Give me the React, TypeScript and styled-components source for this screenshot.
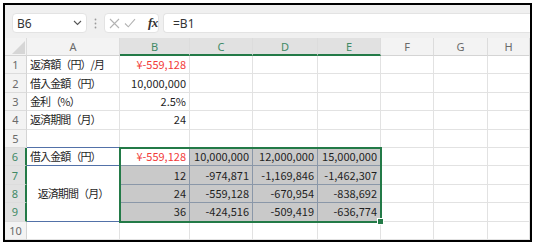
import React from 'react';
import styled, { createGlobalStyle } from 'styled-components';

const GREEN = '#237a47';
const GRID = '#e2e2e2';
const TABLE = '#8a97a8';
const BLUE = '#5271a8';
const SEL = '#c9c9c9';

const Global = createGlobalStyle`
  html, body { margin: 0; padding: 0; background: #fff; }
  body { font-family: "Noto Sans CJK JP", "Noto Sans", sans-serif; }
`;

const Frame = styled.div`
  margin: 3px 0 0 3px;
  width: 529px;
  height: 239px;
  box-sizing: border-box;
  border: 2px solid #000;
  display: flex;
  flex-direction: column;
  overflow: hidden;
  background: #fff;
`;

const Toolbar = styled.div`
  height: 33px;
  flex: none;
  box-sizing: border-box;
  padding: 8px 0 0 7px;
  background: #f0f0f0;
  display: flex;
  align-items: flex-start;
`;

const Box = styled.div`
  height: 20px;
  box-sizing: border-box;
  background: #fff;
  border: 1px solid #e3e3e3;
  border-radius: 4px;
  display: flex;
  align-items: center;
  font-family: "Noto Sans", "Open Sans", sans-serif;
  font-size: 12px;
  color: #333;
`;

const NameBox = styled(Box)`
  width: 75px;
  padding: 0 4px 0 4px;
  justify-content: space-between;
`;

const Grip = styled.div`
  width: 17px;
  height: 20px;
  display: flex;
  align-items: center;
  justify-content: center;
`;

const FxBox = styled(Box)`
  width: 55px;
  padding: 0 0 0 4px;
  gap: 4px;
`;

const FxText = styled.span`
  font-family: "Liberation Serif", "DejaVu Serif", serif;
  font-style: italic;
  font-weight: bold;
  font-size: 13px;
  color: #333;
  margin-left: 8px;
  letter-spacing: -0.5px;
`;

const FormulaBox = styled(Box)`
  flex: 1;
  margin-left: 4px;
  padding-left: 9px;
  border-right: none;
  border-radius: 4px 0 0 4px;
`;

const Sheet = styled.div`
  position: relative;
  flex: 1;
  display: grid;
  grid-template-columns: 22px 93px 70px 63px 65px 63px 53px 54px 1fr;
  grid-template-rows: 18px repeat(10, 18.4px);
  font-size: 11px;
`;

const Corner = styled.div`
  background: #f3f3f3;
  border-right: 1px solid #dcdcdc;
  border-bottom: 1px solid #d4d4d4;
  box-sizing: border-box;
  display: flex;
  align-items: flex-end;
  justify-content: flex-end;
  padding: 0 1px 1px 0;
`;

const Triangle = styled.div`
  width: 0;
  height: 0;
  border-left: 13px solid transparent;
  border-bottom: 13px solid #d6d6d6;
`;

const ColHeader = styled.div<{ $sel?: boolean }>`
  box-sizing: border-box;
  background: ${p => (p.$sel ? '#e1e1e1' : '#f3f3f3')};
  color: ${p => (p.$sel ? '#3f8a66' : '#6a6a6a')};
  border-right: 1px solid #dcdcdc;
  border-bottom: ${p => (p.$sel ? `2px solid ${GREEN}` : '1px solid #d4d4d4')};
  display: flex;
  align-items: center;
  justify-content: center;
  font-family: "Noto Sans", "Open Sans", sans-serif;
  font-size: 11px;
`;

const RowHeader = styled.div<{ $sel?: boolean }>`
  box-sizing: border-box;
  background: ${p => (p.$sel ? '#e1e1e1' : '#f3f3f3')};
  color: ${p => (p.$sel ? '#3f8a66' : '#6a6a6a')};
  border-right: ${p => (p.$sel ? `2px solid ${GREEN}` : '1px solid #d4d4d4')};
  border-bottom: 1px solid #dcdcdc;
  display: flex;
  align-items: center;
  justify-content: center;
  font-family: "Noto Sans", "Open Sans", sans-serif;
  font-size: 11px;
`;

const Cell = styled.div<{
  $align?: 'left' | 'right' | 'center';
  $fill?: string;
  $color?: string;
  $br?: string;
  $bb?: string;
  $span?: number;
  $jp?: boolean;
}>`
  box-sizing: border-box;
  grid-row: ${p => (p.$span ? `span ${p.$span}` : 'auto')};
  background: ${p => p.$fill || '#fff'};
  color: ${p => p.$color || '#1f1f1f'};
  border-right: 1px solid ${p => p.$br || GRID};
  border-bottom: 1px solid ${p => p.$bb || GRID};
  display: flex;
  align-items: center;
  justify-content: ${p =>
    p.$align === 'right' ? 'flex-end' : p.$align === 'center' ? 'center' : 'flex-start'};
  padding: 0 3px;
  white-space: nowrap;
  overflow: visible;
  line-height: 1;
  letter-spacing: ${p => (p.$jp ? '-0.9px' : '0')};
`;

const Selection = styled.div`
  position: absolute;
  grid-column: 3 / 7;
  grid-row: 7 / 11;
  top: -1px;
  left: -1px;
  right: -1px;
  bottom: -1px;
  border: 2px solid ${GREEN};
  pointer-events: none;
`;

const Handle = styled.div`
  position: absolute;
  right: -4px;
  bottom: -4px;
  width: 5px;
  height: 5px;
  background: ${GREEN};
  border: 1px solid #fff;
`;

type C = {
  text?: string;
  align?: 'left' | 'right' | 'center';
  fill?: string;
  color?: string;
  br?: string;
  bb?: string;
  span?: number;
  jp?: boolean;
};

const RED = '#f23a3a';
const cols = ['A', 'B', 'C', 'D', 'E', 'F', 'G', 'H'];
const selCols = ['B', 'C', 'D', 'E'];

const empty = (n: number, extra: Partial<C> = {}): C[] => Array.from({ length: n }, () => ({ ...extra }));

const tableRow = (vals: string[]): C[] =>
  vals.map(t => ({ text: t, align: 'right' as const, fill: SEL, br: TABLE, bb: TABLE }));

const rows: { num: number; sel?: boolean; cells: C[] }[] = [
  {
    num: 1,
    cells: [
      { text: '返済額（円）/月', jp: true },
      { text: '¥-559,128', align: 'right', color: RED },
      ...empty(6),
    ],
  },
  {
    num: 2,
    cells: [{ text: '借入金額（円）', jp: true }, { text: '10,000,000', align: 'right' }, ...empty(6)],
  },
  {
    num: 3,
    cells: [{ text: '金利（%）', jp: true }, { text: '2.5%', align: 'right' }, ...empty(6)],
  },
  {
    num: 4,
    cells: [{ text: '返済期間（月）', jp: true }, { text: '24', align: 'right' }, ...empty(6)],
  },
  {
    num: 5,
    cells: [{ bb: BLUE }, ...empty(4, { bb: TABLE }), ...empty(3)],
  },
  {
    num: 6,
    sel: true,
    cells: [
      { text: '借入金額（円）', jp: true, bb: BLUE, br: BLUE },
      { text: '¥-559,128', align: 'right', color: RED, br: TABLE, bb: TABLE },
      ...tableRow(['10,000,000', '12,000,000', '15,000,000']),
      ...empty(3),
    ],
  },
  {
    num: 7,
    sel: true,
    cells: [
      { text: '返済期間（月）', jp: true, align: 'center', span: 3, br: BLUE, bb: BLUE },
      ...tableRow(['12', '-974,871', '-1,169,846', '-1,462,307']),
      ...empty(3),
    ],
  },
  {
    num: 8,
    sel: true,
    cells: [...tableRow(['24', '-559,128', '-670,954', '-838,692']), ...empty(3)],
  },
  {
    num: 9,
    sel: true,
    cells: [...tableRow(['36', '-424,516', '-509,419', '-636,774']), ...empty(3)],
  },
  { num: 10, cells: empty(8) },
];

const Chevron = () => (
  <svg width="9" height="6" viewBox="0 0 9 6">
    <path d="M1 1 L4.5 4.5 L8 1" fill="none" stroke="#555" strokeWidth="1.1" />
  </svg>
);

const Dots = () => (
  <svg width="3" height="11" viewBox="0 0 3 11">
    <circle cx="1.5" cy="1.5" r="0.9" fill="#9a9a9a" />
    <circle cx="1.5" cy="5.5" r="0.9" fill="#9a9a9a" />
    <circle cx="1.5" cy="9.5" r="0.9" fill="#9a9a9a" />
  </svg>
);

const Cross = () => (
  <svg width="11" height="11" viewBox="0 0 11 11">
    <path d="M1 1 L10 10 M10 1 L1 10" stroke="#b3b3b3" strokeWidth="1.1" fill="none" />
  </svg>
);

const Check = () => (
  <svg width="12" height="10" viewBox="0 0 12 10">
    <path d="M1 5.5 L4.3 8.8 L11 1.2" stroke="#b3b3b3" strokeWidth="1.1" fill="none" />
  </svg>
);

export default function App() {
  return (
    <>
      <Global />
      <Frame>
        <Toolbar>
          <NameBox>
            <span>B6</span>
            <Chevron />
          </NameBox>
          <Grip>
            <Dots />
          </Grip>
          <FxBox>
            <Cross />
            <Check />
            <FxText>fx</FxText>
          </FxBox>
          <FormulaBox>=B1</FormulaBox>
        </Toolbar>
        <Sheet>
          <Corner>
            <Triangle />
          </Corner>
          {cols.map(c => (
            <ColHeader key={c} $sel={selCols.includes(c)}>
              {c}
            </ColHeader>
          ))}
          {rows.map(r => (
            <React.Fragment key={r.num}>
              <RowHeader $sel={r.sel}>{r.num}</RowHeader>
              {r.cells.map((c, i) => (
                <Cell
                  key={i}
                  $align={c.align}
                  $fill={c.fill}
                  $color={c.color}
                  $br={c.br}
                  $bb={c.bb}
                  $span={c.span}
                  $jp={c.jp}
                >
                  {c.text}
                </Cell>
              ))}
            </React.Fragment>
          ))}
          <Selection>
            <Handle />
          </Selection>
        </Sheet>
      </Frame>
    </>
  );
}
